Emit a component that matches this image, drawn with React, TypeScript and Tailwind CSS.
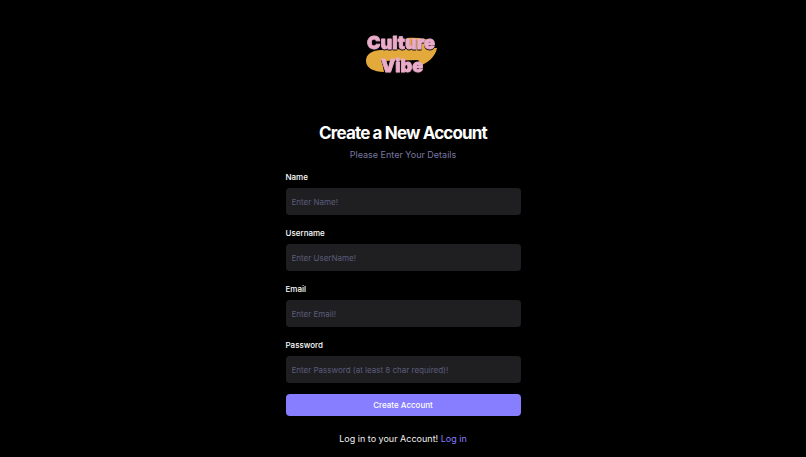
const fields = [
  { id: "name", label: "Name", type: "text", placeholder: "Enter Name!" },
  { id: "username", label: "Username", type: "text", placeholder: "Enter UserName!" },
  { id: "email", label: "Email", type: "email", placeholder: "Enter Email!" },
  { id: "password", label: "Password", type: "password", placeholder: "Enter Password (at least 8 char required)!" },
];

function Logo() {
  return (
    <svg width="80" height="54" viewBox="-2 -6 80 54" role="img" aria-label="Culture Vibe" className="overflow-visible font-['Inter',sans-serif]">
      <path
        d="M42 4 C50 3 60 4 66 7 L69 14 L72 14 C71 20 66 27 57 31 L53 26 L17 27 L19 38 C9 38 1 34 1 27 C1 20 7 16 17 16 L42 15 Z"
        fill="#e3a93b"
      />
      <g
        className="drop-shadow-[0_1px_0_#171014]"
        fill="#eaacc9"
        stroke="#eaacc9"
        strokeWidth="0.8"
        strokeLinejoin="round"
        fontWeight="900"
        fontSize="18"
        textAnchor="middle"
      >
        <text x="36" y="15">Culture</text>
        <text x="37" y="38">Vibe</text>
      </g>
    </svg>
  );
}

export default function App() {
  return (
    <main className="flex min-h-screen flex-col items-center bg-black px-4 pt-7 pb-3 font-['Inter',sans-serif] text-white">
      <Logo />
      <h1 className="mt-[41px] text-[17px] leading-5 font-bold tracking-tighter">Create a New Account</h1>
      <p className="mt-1.5 text-[9px] leading-3 text-[#7878a3]">Please Enter Your Details</p>
      <form className="mt-[9px] flex w-full max-w-[235px] flex-col gap-[11px]" onSubmit={(e) => e.preventDefault()}>
        {fields.map((f) => (
          <div key={f.id} className="flex flex-col gap-1">
            <label htmlFor={f.id} className="text-[8px] leading-[14px] font-medium">
              {f.label}
            </label>
            <input
              id={f.id}
              type={f.type}
              placeholder={f.placeholder}
              className="h-[27px] w-full rounded-[4px] bg-[#1f1f22] px-1.5 text-[8px] outline-none placeholder:text-[#5c5c7b]"
            />
          </div>
        ))}
        <button type="submit" className="h-[22px] rounded-[4px] bg-[#877eff] text-[8px] font-medium">
          Create Account
        </button>
      </form>
      <p className="mt-[17px] text-[9px] leading-3 text-[#efefef]">
        Log in to your Account!{" "}
        <a href="#login" className="text-[#877eff]">
          Log in
        </a>
      </p>
    </main>
  );
}
